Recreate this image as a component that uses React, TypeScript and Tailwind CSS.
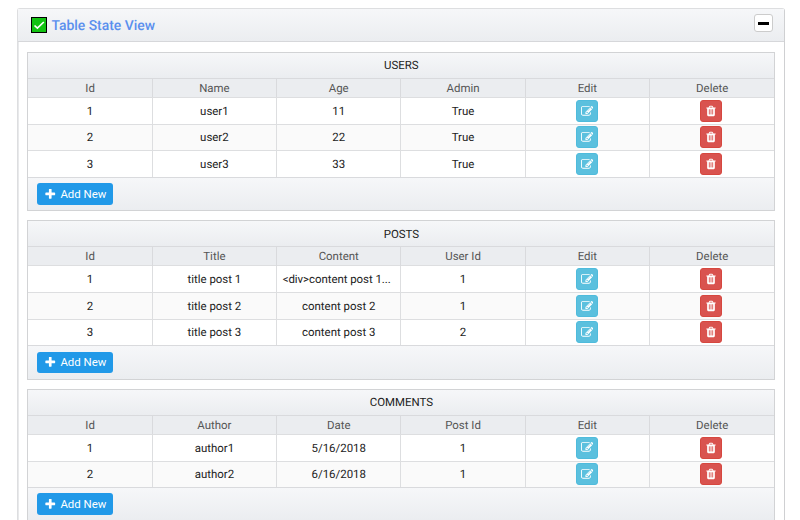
import React from "react";

function Icon({ d, className }: { d: string; className: string }) {
  return (
    <svg viewBox="0 0 1792 1792" className={className} fill="currentColor" aria-hidden="true">
      <path d={d} />
    </svg>
  );
}

const EDIT =
  "M888 1184l116-116-152-152-116 116v56h96v96h56zm440-720q-16-16-33 1l-350 350q-17 17-1 33t33-1l350-350q17-17 1-33zm80 594v190q0 119-84.5 203.5t-203.5 84.5h-832q-119 0-203.5-84.5t-84.5-203.5v-832q0-119 84.5-203.5t203.5-84.5h832q63 0 117 25 15 7 18 23 3 17-9 29l-49 49q-14 14-32 8-23-6-45-6h-832q-66 0-113 47t-47 113v832q0 66 47 113t113 47h832q66 0 113-47t47-113v-126q0-13 9-22l64-64q15-15 35-7t20 29zm-96-738l288 288-672 672h-288v-288zm444 132l-92 92-288-288 92-92q28-28 68-28t68 28l152 152q28 28 28 68t-28 68z";
const TRASH =
  "M704 1376v-704q0-14-9-23t-23-9h-64q-14 0-23 9t-9 23v704q0 14 9 23t23 9h64q14 0 23-9t9-23zm256 0v-704q0-14-9-23t-23-9h-64q-14 0-23 9t-9 23v704q0 14 9 23t23 9h64q14 0 23-9t9-23zm256 0v-704q0-14-9-23t-23-9h-64q-14 0-23 9t-9 23v704q0 14 9 23t23 9h64q14 0 23-9t9-23zm-544-992h448l-48-117q-7-9-17-11h-317q-10 2-17 11zm928 32v64q0 14-9 23t-23 9h-96v948q0 83-47 143.5t-113 60.5h-832q-66 0-113-58.5t-47-141.5v-952h-96q-14 0-23-9t-9-23v-64q0-14 9-23t23-9h309l70-167q15-37 54-63t79-26h320q40 0 79 26t54 63l70 167h309q14 0 23 9t9 23z";
const PLUS =
  "M1600 736v192q0 40-28 68t-68 28h-416v416q0 40-28 68t-68 28h-192q-40 0-68-28t-28-68v-416h-416q-40 0-68-28t-28-68v-192q0-40 28-68t68-28h416v-416q0-40 28-68t68-28h192q40 0 68 28t28 68v416h416q40 0 68 28t28 68z";

type TableData = { title: string; columns: string[]; rows: string[][] };

const TABLES: TableData[] = [
  {
    title: "USERS",
    columns: ["Id", "Name", "Age", "Admin"],
    rows: [
      ["1", "user1", "11", "True"],
      ["2", "user2", "22", "True"],
      ["3", "user3", "33", "True"],
    ],
  },
  {
    title: "POSTS",
    columns: ["Id", "Title", "Content", "User Id"],
    rows: [
      ["1", "title post 1", "<div>content post 1...", "1"],
      ["2", "title post 2", "content post 2", "1"],
      ["3", "title post 3", "content post 3", "2"],
    ],
  },
  {
    title: "COMMENTS",
    columns: ["Id", "Author", "Date", "Post Id"],
    rows: [
      ["1", "author1", "5/16/2018", "1"],
      ["2", "author2", "6/16/2018", "1"],
    ],
  },
];

function DataTable({ title, columns, rows }: TableData) {
  return (
    <section className="shrink-0 border border-[#d2d3d5]">
      <h2 className="flex h-[25.4px] items-center justify-center bg-linear-to-b from-[#f6f7f9] to-[#ebedf0] pt-px text-[#222]">
        {title}
      </h2>
      <div className="grid h-[19px] grid-cols-6 border-t border-[#d9dadd] bg-[#ebedf0] text-[#555]">
        {[...columns, "Edit", "Delete"].map((name) => (
          <div key={name} className="flex items-center justify-center border-r border-[#d9dadd] pt-px last:border-r-0">
            {name}
          </div>
        ))}
      </div>
      {rows.map((row, n) => (
        <div
          key={row[0]}
          className={
            "grid h-[26.6px] grid-cols-6 border-t border-[#dddee0] text-[#222] " +
            (n % 2 ? "bg-[#fafafa]" : "bg-white")
          }
        >
          {row.map((cell, i) => (
            <div
              key={i}
              className={
                "flex items-center justify-center border-r border-[#dddee0] pt-px " +
                (cell.endsWith("...") ? "pr-1 tracking-[-0.04px]" : "")
              }
            >
              {cell}
            </div>
          ))}
          <div className="flex items-center justify-center border-r border-[#dddee0]">
            <button aria-label="Edit" className="flex size-[22px] items-center justify-center rounded-[3px] border border-[#4fbbdc] bg-[#5bc0de] text-white">
              <Icon d={EDIT} className="mr-px size-[12.5px]" />
            </button>
          </div>
          <div className="flex items-center justify-center pr-[2px]">
            <button aria-label="Delete" className="flex size-[22px] items-center justify-center rounded-[3px] border border-[#d6473f] bg-[#d9534f] text-white">
              <Icon d={TRASH} className="size-3" />
            </button>
          </div>
        </div>
      ))}
      <div className="flex h-[33.3px] items-center border-t border-[#d9dadd] bg-linear-to-b from-[#f6f7f9] to-[#ebedf0] pl-[8.6px]">
        <button className="flex h-[21.6px] w-[76.4px] items-center justify-center gap-[4px] rounded-[3px] bg-[#2199e8] pt-px text-white">
          <Icon d={PLUS} className="mb-px size-[12.5px]" />
          Add New
        </button>
      </div>
    </section>
  );
}

export default function App() {
  return (
    <main className="h-[520px] overflow-hidden bg-white pt-[7.6px] pl-[17.4px] font-['Roboto',sans-serif] text-[11.45px] [text-rendering:geometricPrecision]">
      <div className="h-[600px] w-[768px] rounded-t-[3px] border border-r-[#cfd0d2] border-[#dddee0] shadow-[inset_1px_0_0_#e8e9eb]">
        <header className="flex h-[33px] items-center border-b border-[#d6d7da] bg-linear-to-b from-[#f6f7f9] to-[#ebedf0] pr-[11px] pl-[12.6px]">
          <span className="flex size-4 items-center justify-center border border-black bg-[#12c312] text-white">
            <svg viewBox="0 0 14 14" className="size-[14px]" fill="none" stroke="currentColor" strokeWidth="1.7">
              <path d="M2.5 7.5L5.4 10.2L11.8 4" />
            </svg>
          </span>
          <h1 className="ml-[4.4px] pt-[3px] text-[13.9px] font-medium text-[#5a8fee]">Table State View</h1>
          <button aria-label="Collapse" className="mb-[3px] ml-auto flex h-[18px] w-[19px] items-center justify-center rounded-[3px] border border-[#ccc] bg-white">
            <span className="h-[3px] w-[11px] bg-black" />
          </button>
        </header>
        <div className="flex flex-col gap-[9px] pt-[10px] pr-[9px] pl-[9px]">
          {TABLES.map((table) => (
            <DataTable key={table.title} {...table} />
          ))}
        </div>
      </div>
    </main>
  );
}
